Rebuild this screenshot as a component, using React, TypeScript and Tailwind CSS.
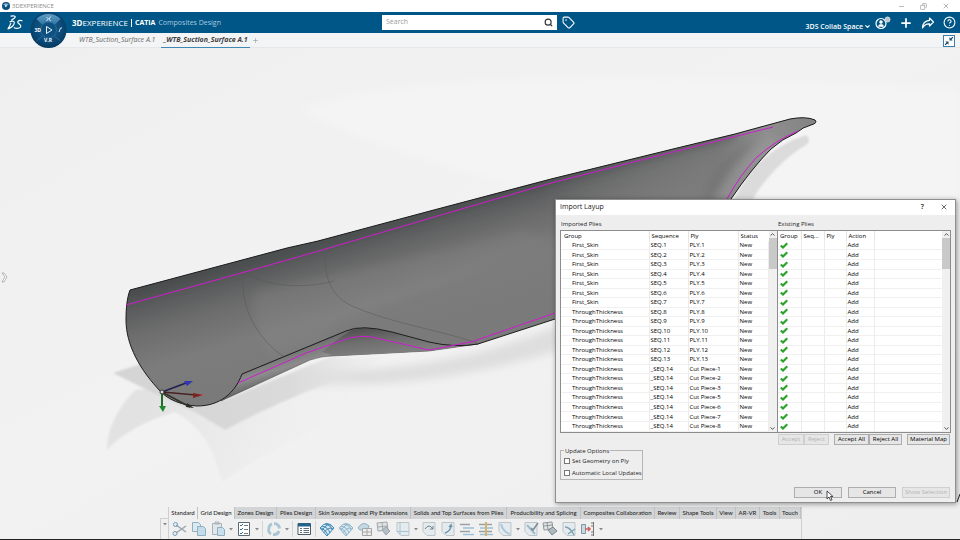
import { useState } from "react";
import {
    ChevronDown,
    ChevronUp,
    CircleHelp,
    Copy,
    Minus,
    Plus,
    Search,
    Tag,
    X,
} from "lucide-react";

const skins = [1, 2, 3, 4, 5, 6, 7].map((n) => ({
    group: "First_Skin",
    sequence: `SEQ.${n}`,
    ply: `PLY.${n}`,
}));
const thickness = [8, 9, 10, 11, 12, 13].map((n) => ({
    group: "ThroughThickness",
    sequence: `SEQ.${n}`,
    ply: `PLY.${n}`,
}));
const pieces = [1, 2, 3, 5, 6, 7, 8].map((n) => ({
    group: "ThroughThickness",
    sequence: "_SEQ.14",
    ply: `Cut Piece-${n}`,
}));
const plies = [...skins, ...thickness, ...pieces];

const sections = [
    "Standard",
    "Grid Design",
    "Zones Design",
    "Plies Design",
    "Skin Swapping and Ply Extensions",
    "Solids and Top Surfaces from Plies",
    "Producibility and Splicing",
    "Composites Collaboration",
    "Review",
    "Shape Tools",
    "View",
    "AR-VR",
    "Tools",
    "Touch",
];

function TitleBar() {
    return (
        <div className="flex h-3 shrink-0 items-center bg-white px-0.5 text-[#8a8a8a]">
            <svg viewBox="0 0 10 10" className="h-2 w-2">
                <circle cx="5" cy="5" r="5" fill="#0b4f7d" />
                <path d="M1.5 3.5a4 4 0 0 1 7 0L5 5z" fill="#7db4d6" />
                <path d="M4 3.5v3L6.5 5z" fill="#fff" />
            </svg>
            <span className="ml-0.5 text-[6px] leading-3">3DEXPERIENCE</span>
            <div className="ml-auto flex gap-[15px] pr-2">
                <button aria-label="Minimize">
                    <Minus size={7} strokeWidth={2} />
                </button>
                <button aria-label="Restore">
                    <Copy size={7} strokeWidth={2} className="-scale-x-100" />
                </button>
                <button aria-label="Close">
                    <X size={8} strokeWidth={2} />
                </button>
            </div>
        </div>
    );
}

function Compass() {
    return (
        <svg viewBox="0 0 38 38" className="absolute top-0 left-[29px] z-10 h-[38px] w-[38px]">
            <defs>
                <radialGradient id="ball" cx="50%" cy="45%" r="55%">
                    <stop offset="0" stopColor="#1c5f8e" />
                    <stop offset="0.7" stopColor="#0b4a78" />
                    <stop offset="1" stopColor="#06395f" />
                </radialGradient>
                <linearGradient id="north" x1="0" y1="0" x2="0" y2="1">
                    <stop offset="0" stopColor="#5d9cc4" />
                    <stop offset="1" stopColor="#2f75a3" />
                </linearGradient>
            </defs>
            <circle cx="19.500" cy="18" r="18" fill="url(#ball)" />
            <path d="M7.500 7a17 17 0 0 1 24 0l-6 6a9 9 0 0 0-12 0z" fill="url(#north)" />
            <circle cx="19.500" cy="18" r="8" fill="#0e507f" stroke="#2c6f9c" strokeWidth="0.8" />
            <path d="M7.500 29l6-5M31.500 29l-6-5" stroke="#2c6f9c" strokeWidth="0.8" />
            <path d="M17.500 14.500v7l5.500-3.500z" fill="none" stroke="#e8f3fa" strokeWidth="1" />
            <path d="M17.500 5.500l2 1-2 2.500M21.500 4.500l-1.500 3 2 1.500" fill="none" stroke="#dcebf5" strokeWidth="0.9" />
            <text x="5.500" y="20" fontSize="5" fontWeight="700" fill="#fff">3D</text>
            <path d="M30 20l1.500-4M31.500 16h1.500" stroke="#cfe3f0" strokeWidth="1" />
            <text x="15" y="30" fontSize="5" fontWeight="700" fill="#fff">V.R</text>
        </svg>
    );
}

function Header() {
    return (
        <header className="relative flex h-[21px] shrink-0 items-center bg-[#005686] text-white">
            <Compass />
            <div className="flex w-[382px] items-center pl-[7px]">
                <svg viewBox="0 0 16 16" className="h-4 w-4" fill="none" stroke="#fff" strokeWidth="1.200" strokeLinecap="round">
                    <path d="M4 1.200c2.500-.7 4.500-.2 4.200 1C8 3.300 6 4.200 4.600 5" />
                    <path d="M1 13.800c3-.8 6.200-3.300 6.300-6C7.300 5.500 4.500 6 3 6.800M3.800 8.400c-.7 1.800-1.700 3.800-2.800 5.400" />
                    <path d="M15 5.800c-2-.9-4.600-.2-4.200 1.500.4 1.500 3.300 2.200 3 4-.4 2.200-4.500 2.600-6.500 1.400" />
                </svg>
                <div className="ml-[49px] flex items-center text-[8px] leading-3 whitespace-nowrap">
                    <b>3D</b>
                    <span>EXPERIENCE</span>
                    <span className="mx-[3px] h-2 w-px bg-white" />
                    <b className="text-[7px]">CATIA</b>
                    <span className="ml-[3px] text-[7px] text-[#a9cbe0]">Composites Design</span>
                </div>
            </div>
            <form className="flex h-[15px] w-[175px] items-center bg-white pr-1">
                <input
                    aria-label="Search"
                    placeholder="Search"
                    className="min-w-0 flex-1 px-1 text-[7px] text-gray-700 outline-none placeholder:text-[#9a9a9a]"
                />
                <button type="button" aria-label="Run search" className="text-[#333]">
                    <Search size={9} strokeWidth={3} />
                </button>
            </form>
            <button aria-label="Tags" className="ml-[5px]">
                <Tag size={13} strokeWidth={2} />
            </button>
            <div className="ml-auto flex items-center gap-1 pr-1">
                <button className="flex items-center gap-px pt-2 text-[7px] leading-3 font-semibold">
                    3DS Collab Space
                    <ChevronDown size={7} strokeWidth={4} />
                </button>
                <div className="flex items-center gap-2">
                    <button aria-label="Profile">
                        <svg viewBox="0 0 16 14" className="h-[14px] w-4" fill="none" stroke="#fff">
                            <circle cx="6" cy="7.500" r="5" strokeWidth="1.200" />
                            <circle cx="6" cy="6" r="1.500" fill="#fff" strokeWidth="0.500" />
                            <path d="M3.500 10.500c0-3 5-3 5 0z" fill="#fff" strokeWidth="0.500" />
                            <circle cx="12.500" cy="3.500" r="2.500" fill="#b9c4cc" stroke="#d7dde1" />
                        </svg>
                    </button>
                    <button aria-label="Add">
                        <Plus size={14} strokeWidth={3} />
                    </button>
                    <button aria-label="Share">
                        <svg viewBox="0 0 14 14" className="h-[14px] w-[14px]" fill="none" stroke="#fff" strokeWidth="1.200" strokeLinejoin="round">
                            <path d="M8.500 2l4 4-4 4V7.800C5 7.600 3 9 1.500 12 1.700 7.500 4 4.800 8.500 4.400z" />
                        </svg>
                    </button>
                    <button aria-label="Help">
                        <CircleHelp size={13} strokeWidth={2} />
                    </button>
                </div>
            </div>
        </header>
    );
}

function DocumentTabs() {
    return (
        <nav className="flex h-[15px] shrink-0 items-start border-b border-[#e6e7e9] bg-[#f3f4f6] pl-[79px] text-[7px] leading-[14px] text-[#6b6b6b] italic">
            <a href="#first">WTB_Suction_Surface A.1</a>
            <a href="#second" className="ml-1.5 border-b-2 border-[#3f87b5] px-0.5 font-bold text-[#3d3d3d]">
                _WTB_Suction_Surface A.1
            </a>
            <button aria-label="New tab" className="ml-0.5 self-center text-[#999]">
                <Plus size={7} />
            </button>
            <button aria-label="Exit full view" className="mt-0.5 mr-[5px] ml-auto">
                <svg viewBox="0 0 12 12" className="h-3 w-3">
                    <rect x="0.500" y="0.500" width="11" height="11" fill="#fff" stroke="#3a7eab" />
                    <path d="M6.500 5.500V2.300l1.200 1.200L9.500 1.800l.8.8-1.800 1.800 1.200 1.100zM5.500 6.500v3.200L4.300 8.500l-1.800 1.700-.8-.8 1.800-1.800-1.200-1.100z" fill="#14466b" />
                </svg>
            </button>
        </nav>
    );
}

const outline =
    "M130 290L287 248 318 241 430 211 551 179 673 149 735 134 790 119Q806 116 815 120Q818 123 811 125Q803 127 796 133Q782 139 771 149Q752 168 731 199L680 270 555 319 478 344Q455 348 429 342L392 332Q361 324 346 331L242 374C235 393 220 406 197 406C180 405 168 399 161 392C140 370 126 345 126 320C126 308 127 298 130 290Z";

function BladeScene() {
    return (
        <svg
            viewBox="0 48 960 491"
            preserveAspectRatio="xMidYMid slice"
            className="absolute inset-0 h-full w-full"
        >
            <defs>
                <linearGradient id="floor" x1="0" y1="0" x2="1" y2="1">
                    <stop offset="0" stopColor="#efeff0" />
                    <stop offset="0.45" stopColor="#f2f2f2" />
                    <stop offset="1" stopColor="#eeeeee" />
                </linearGradient>
                <linearGradient id="skin" gradientUnits="userSpaceOnUse" x1="330" y1="234" x2="364" y2="350">
                    <stop offset="0" stopColor="#4c4f51" />
                    <stop offset="0.12" stopColor="#585a5b" />
                    <stop offset="0.35" stopColor="#6d6d6d" />
                    <stop offset="0.65" stopColor="#7c7c7c" />
                    <stop offset="1" stopColor="#7a7a7a" />
                </linearGradient>
                <linearGradient id="tip" gradientUnits="userSpaceOnUse" x1="560" y1="240" x2="810" y2="130">
                    <stop offset="0" stopColor="#8a8a8a" stopOpacity="0" />
                    <stop offset="0.65" stopColor="#808080" stopOpacity="0.7" />
                    <stop offset="0.85" stopColor="#939393" stopOpacity="0.9" />
                    <stop offset="1" stopColor="#858585" />
                </linearGradient>
                <linearGradient id="under" gradientUnits="userSpaceOnUse" x1="280" y1="352" x2="288" y2="378">
                    <stop offset="0" stopColor="#6e6e6e" />
                    <stop offset="0.6" stopColor="#8c8c8c" />
                    <stop offset="1" stopColor="#6a6a6a" />
                </linearGradient>
                <linearGradient id="wave" gradientUnits="userSpaceOnUse" x1="365" y1="328" x2="368" y2="355">
                    <stop offset="0" stopColor="#505050" />
                    <stop offset="0.5" stopColor="#6e6e6e" />
                    <stop offset="1" stopColor="#7e7e7e" />
                </linearGradient>
                <linearGradient id="shade" gradientUnits="userSpaceOnUse" x1="120" y1="390" x2="400" y2="360">
                    <stop offset="0" stopColor="#d4d4d4" />
                    <stop offset="0.6" stopColor="#dadada" />
                    <stop offset="1" stopColor="#e8e8e8" stopOpacity="0" />
                </linearGradient>
                <linearGradient id="faint" gradientUnits="userSpaceOnUse" x1="150" y1="400" x2="360" y2="470">
                    <stop offset="0" stopColor="#e2e2e2" />
                    <stop offset="1" stopColor="#f0f0f0" stopOpacity="0" />
                </linearGradient>
                <filter id="soft" x="-20%" y="-20%" width="140%" height="140%">
                    <feGaussianBlur stdDeviation="4" />
                </filter>
                <filter id="edge" x="-20%" y="-20%" width="140%" height="140%">
                    <feGaussianBlur stdDeviation="1" />
                </filter>
                <clipPath id="outline">
                    <path d={outline} />
                </clipPath>
            </defs>
            <rect x="0" y="48" width="960" height="491" fill="url(#floor)" />
            <g filter="url(#soft)">
                <path d="M300 110Q420 60 960 90V205H600Q400 160 300 110z" fill="#f4f4f4" />
                <path d="M300 370Q440 375 560 325V350Q430 390 300 385z" fill="#dedede" />
            </g>
            <g filter="url(#edge)">
                <path d="M135 390C116 410 107 430 107 450Q130 425 175 412 210 430 222 482 280 440 400 395L330 370z" fill="url(#faint)" />
                <path d="M113 373L141 364 165 395 225 400 330 357 380 358 365 370Q290 395 225 430L195 412 160 396z" fill="url(#shade)" />
                <path d="M806 135Q812 140 806 145Q780 160 757 192L750 205H730L752 170Q775 145 806 135z" fill="#dbdbdb" />
            </g>

            {/* underside of the flange */}
            <path d="M242 374L346 331Q361 324 392 332L429 342Q455 348 478 344L429 351 332 356Q322 356 310 360L221 401Q236 390 242 374z" fill="url(#under)" stroke="#444" strokeWidth="0.500" />
            <path d="M322 352Q338 338 350 331Q361 325 392 332L429 342Q455 348 478 344L429 351 336 356z" fill="url(#wave)" />

            <g clipPath="url(#outline)">
                <rect x="120" y="110" width="700" height="300" fill="url(#skin)" />
                <path d="M540 182L820 110V330H540z" fill="url(#tip)" />
                <g filter="url(#soft)">
                    <path d="M125 286L318 237 551 175 735 130V139L551 186 318 251 130 300z" fill="#484a4c" opacity="0.500" />
                    <path d="M255 290Q330 280 520 230L555 240 400 300Q330 320 320 340L270 356Q250 320 255 290z" fill="#8a8a8a" opacity="0.250" />
                    <path d="M715 200Q735 160 765 140L780 142Q750 170 732 200z" fill="#a0a0a0" opacity="0.500" />
                    <path d="M700 200Q715 165 745 145L755 146Q725 170 715 200z" fill="#6c6c6c" opacity="0.400" />
                </g>
            </g>
            <path d={outline} fill="none" stroke="#1d1d1d" strokeWidth="1" />
            <g fill="none" stroke="#565656" strokeWidth="0.500">
                <path d="M244 272C238 305 258 340 283 356" />
                <path d="M245 272C265 287 305 289 334 281" />
                <path d="M325 252C324 275 330 295 350 305C385 322 440 330 477 343" />
            </g>
            <g fill="none" stroke="#cf1ccf" strokeWidth="1">
                <path d="M126 305L245 272 312 253 441 215 551 183 673 152 773 127" />
                <path d="M238 383L306 353 349 338Q360 335 372 337L429 350 471 342 558 312" />
                <path d="M798 131Q776 140 757 157 740 175 727 199" />
            </g>

            {/* axis system at the root of the blade */}
            <g fill="none" strokeWidth="1.500">
                <path d="M162 392L186 383" stroke="#20204e" />
                <path d="M162 392L196 395" stroke="#4a2020" />
                <path d="M162 392L190 407" stroke="#333028" />
                <path d="M162 392V408" stroke="#1f6b2b" strokeWidth="2" />
            </g>
            <path d="M184 381l9 0-6 5z" fill="#2f35b5" />
            <path d="M193 393l10 2-10 3z" fill="#7c2424" />
            <circle cx="202" cy="395" r="1" fill="#e23b3b" />
            <path d="M187 403l7 5-8-1z" fill="#2b2b2b" />
            <path d="M159 406h7l-3 6z" fill="#1c8a2e" />
            <circle cx="162" cy="392" r="2" fill="#ddd" stroke="#333" />
            <path d="M960 494l-3 8" stroke="#222" strokeWidth="1" />

            <path d="M2 273h2l3 4-3 5H2l3-5z" fill="#fff" stroke="#999" strokeWidth="0.700" />
        </svg>
    );
}

function ScrollBar() {
    return (
        <div className="flex w-2 shrink-0 flex-col items-center bg-[#f0f0f0] text-[#444]">
            <ChevronUp size={7} strokeWidth={3} />
            <div className="h-[31px] w-full bg-[#c9c9c9]" />
            <ChevronDown size={7} strokeWidth={3} className="mt-auto" />
        </div>
    );
}

function ImportedPlies() {
    return (
        <section className="w-[217px] shrink-0">
            <h3 className="h-[10px] pl-px leading-[9px]">Imported Plies</h3>
            <div className="flex border border-[#8c8c8c] bg-white text-black">
                <table className="w-[207px] table-fixed border-collapse text-left">
                    <colgroup>
                        <col className="w-[88px]" />
                        <col className="w-[39px]" />
                        <col className="w-[50px]" />
                        <col className="w-[30px]" />
                    </colgroup>
                    <thead>
                        <tr className="h-[10px]">
                            <th className="border-r border-[#e4e4e4] pl-[3px] font-normal">Group</th>
                            <th className="border-r border-[#e4e4e4] pl-0.5 font-normal">Sequence</th>
                            <th className="border-r border-[#e4e4e4] pl-0.5 font-normal">Ply</th>
                            <th className="pl-0.5 font-normal">Status</th>
                        </tr>
                    </thead>
                    <tbody className="h-[190px]">
                        {plies.map((row) => (
                            <tr key={row.group + row.ply} className="border-b border-[#f0f0f0]">
                                <td className="border-r border-[#ececec] pl-[11px]">{row.group}</td>
                                <td className="border-r border-[#ececec] pl-px">{row.sequence}</td>
                                <td className="border-r border-[#ececec] pl-px">{row.ply}</td>
                                <td className="border-r border-[#ececec] pl-px">New</td>
                            </tr>
                        ))}
                    </tbody>
                </table>
                <ScrollBar />
            </div>
        </section>
    );
}

function ExistingPlies() {
    return (
        <section className="min-w-0 flex-1">
            <h3 className="h-[10px] pl-px leading-[9px]">Existing Plies</h3>
            <div className="flex border border-[#8c8c8c] bg-white text-black">
                <table className="min-w-0 flex-1 table-fixed border-collapse text-left">
                    <colgroup>
                        <col className="w-[23px]" />
                        <col className="w-[23px]" />
                        <col className="w-[22px]" />
                        <col className="w-[28px]" />
                        <col />
                    </colgroup>
                    <thead>
                        <tr className="h-[10px]">
                            <th className="border-r border-[#e4e4e4] pl-0.5 font-normal">Group</th>
                            <th className="border-r border-[#e4e4e4] pl-0.5 font-normal">Seq...</th>
                            <th className="border-r border-[#e4e4e4] pl-0.5 font-normal">Ply</th>
                            <th className="border-r border-[#e4e4e4] pl-0.5 font-normal">Action</th>
                            <th />
                        </tr>
                    </thead>
                    <tbody className="h-[190px]">
                        {plies.map((row) => (
                            <tr key={row.group + row.ply} className="border-b border-[#f0f0f0]">
                                <td className="border-r border-[#ececec] pl-0.5">
                                    <svg viewBox="0 0 8 7" className="h-[7px] w-2">
                                        <path d="M.8 3.500l2.200 2L7.300 1.200" fill="none" stroke="#2ba32a" strokeWidth="2.200" />
                                    </svg>
                                </td>
                                <td className="border-r border-[#ececec]" />
                                <td className="border-r border-[#ececec]" />
                                <td className="border-r border-[#ececec] pl-px">Add</td>
                                <td />
                            </tr>
                        ))}
                    </tbody>
                </table>
                <ScrollBar />
            </div>
        </section>
    );
}

const buttonClass =
    "h-[11px] border border-[#adadad] bg-[#e6e6e6] text-center leading-[9px] whitespace-nowrap text-black disabled:border-[#cfcfcf] disabled:text-[#b3b3b3]";

function ImportDialog() {
    const [geometry, setGeometry] = useState(false);
    const [updates, setUpdates] = useState(false);

    return (
        <div
            role="dialog"
            aria-label="Import Layup"
            className="absolute top-[151px] right-1 w-[401px] border border-[#8f8f8f] bg-[#eeeeee] text-[6px] leading-[8px] text-[#222] shadow-[1px_1px_5px_rgba(0,0,0,0.4)]"
        >
            <div className="flex h-[15px] items-center bg-white px-1 pb-px text-[7px]">
                <span>Import Layup</span>
                <button aria-label="Help" className="ml-auto font-semibold">
                    ?
                </button>
                <button aria-label="Close" className="mr-[3px] ml-4">
                    <X size={8} strokeWidth={2} />
                </button>
            </div>
            <div className="px-1 pt-[5px] pb-1">
                <div className="flex">
                    <ImportedPlies />
                    <ExistingPlies />
                </div>
                <div className="mt-px flex justify-end pr-px">
                    <button disabled className={`${buttonClass} w-[26px]`}>Accept</button>
                    <button disabled className={`${buttonClass} w-[25px]`}>Reject</button>
                    <button className={`${buttonClass} ml-[5px] w-[35px]`}>Accept All</button>
                    <button className={`${buttonClass} w-[33px]`}>Reject All</button>
                    <button className={`${buttonClass} ml-[5px] w-[43px] border-[#555]`}>Material Map</button>
                </div>
                <fieldset className="mt-0.5 w-[83px] border border-[#b5b5b5] pl-[3px]">
                    <legend className="px-px">Update Options</legend>
                    <label className="flex h-3 items-center gap-0.5 whitespace-nowrap">
                        <input
                            type="checkbox"
                            checked={geometry}
                            onChange={(e) => setGeometry(e.target.checked)}
                            className="h-1.5 w-1.5 shrink-0 appearance-none border border-[#777] bg-white checked:bg-[#005686]"
                        />
                        Set Geometry on Ply
                    </label>
                    <label className="flex h-3 items-center gap-0.5 whitespace-nowrap">
                        <input
                            type="checkbox"
                            checked={updates}
                            onChange={(e) => setUpdates(e.target.checked)}
                            className="h-1.5 w-1.5 shrink-0 appearance-none border border-[#777] bg-white checked:bg-[#005686]"
                        />
                        Automatic Local Updates
                    </label>
                </fieldset>
                <div className="mt-[7px] flex justify-end gap-1.5 pr-px">
                    <button className={`${buttonClass} w-12`}>OK</button>
                    <button className={`${buttonClass} w-12`}>Cancel</button>
                    <button disabled className={`${buttonClass} w-12`}>Show Selection</button>
                </div>
            </div>
            <svg viewBox="0 0 8 12" className="absolute right-[121px] bottom-0 h-3 w-2">
                <path d="M1 1v8l2-2 1.500 3.500 1.500-.7L4.500 6.500H7z" fill="#fff" stroke="#222" strokeWidth="0.800" />
            </svg>
        </div>
    );
}

function Tool({ label, children }) {
    return (
        <button aria-label={label} className="flex w-[19px] shrink-0 justify-center">
            <svg viewBox="0 0 16 16" className="h-4 w-4" fill="none" stroke="#8fa3ae" strokeWidth="1">
                {children}
            </svg>
        </button>
    );
}

function Caret() {
    return (
        <button aria-label="More" className="flex w-[7px] shrink-0 items-center justify-center">
            <svg viewBox="0 0 4 3" className="h-[3px] w-1">
                <path d="M0 0h4L2 2.500z" fill="#8a8a8a" />
            </svg>
        </button>
    );
}

function Divider() {
    return <span className="ml-0.5 w-0.5 border-l border-[#d5d5d5]" />;
}

function Mesh({ color }) {
    return (
        <g stroke={color} fill="none">
            <path d="M1 7Q8-2 15 7L8 15z" fill="#d9e8f1" />
            <path d="M3 9Q9 1 13 5M5 11.500Q10 5 14 8M3 5Q9 6 11 12M6 3Q12 4 13 9M2 7Q6 8 9 14" />
        </g>
    );
}

function Sheet() {
    return <path d="M2 1.500h12v13H6l-4-4z" fill="#e4ebef" stroke="#bcc5ca" />;
}

function ActionBar() {
    return (
        <div className="relative mt-auto flex w-full justify-center pl-0.5">
            <div className="flex w-[642px]">
                <div className="mt-[11px] flex h-[21px] w-2 justify-center border-t border-l border-[#d0d0d0] bg-[#f0f0f0] pt-1">
                    <svg viewBox="0 0 4 3" className="h-[3px] w-1">
                        <path d="M0 0h4L2 2.500z" fill="#888" />
                    </svg>
                </div>
                <div className="min-w-0 flex-1 border-x border-[#cfcfcf]">
                    <nav className="grid h-[11px] grid-cols-[29px_37px_42px_39px_95px_96px_74px_74px_25px_37px_19px_24px_20px_1fr] bg-[#d2d4d5] font-['Lato',sans-serif] text-[6px] leading-[12px] font-medium text-[#2b2b2b]">
                        {sections.map((name, i) => (
                            <a
                                key={name}
                                href={"#" + i}
                                className={
                                    i < 2
                                        ? "border-r border-[#bfc1c2] bg-[#f0f0f0] text-center whitespace-nowrap"
                                        : "border-r border-[#bfc1c2] text-center whitespace-nowrap"
                                }
                            >
                                {name}
                            </a>
                        ))}
                    </nav>
                    <div className="flex h-[21px] items-stretch border-t border-[#d5d5d5] bg-[#f0f0f0] py-0.5 pl-px">
                        <Tool label="Cut">
                            <path d="M4 4l10 7M4 12l10-7" stroke="#9aa7ae" strokeWidth="1.500" />
                            <circle cx="3" cy="12.500" r="2" stroke="#6d9fbd" />
                            <circle cx="3.500" cy="3.500" r="2" stroke="#6d9fbd" />
                        </Tool>
                        <Tool label="Copy">
                            <path d="M1.500 1.500h6l2 2v7h-8z" fill="#dbe9f1" stroke="#8fb0c4" />
                            <path d="M6.500 5.500h6l2 2v7h-8z" fill="#c4dcea" stroke="#8fb0c4" />
                        </Tool>
                        <Tool label="Paste">
                            <path d="M2.500 2.500h9v11h-9zM5 1h4v2H5z" fill="#e3e6e8" stroke="#a9b3b9" />
                            <path d="M7.500 6.500h5l2 2v6h-7z" fill="#c9dfec" stroke="#8fb0c4" />
                        </Tool>
                        <Caret />
                        <Tool label="Tree">
                            <path d="M2.500 1.500h11v13h-11z" fill="#fff" stroke="#5b6a73" />
                            <path d="M4 4l1 1 2-2M4 8l1 1 2-2M4 12l1 1 2-2" stroke="#2f6e98" />
                            <path d="M8 4.500h4M8 8.500h4M8 12.500h4" stroke="#777" />
                        </Tool>
                        <Caret />
                        <Divider />
                        <Tool label="Update">
                            <path d="M3 9a5 5 0 0 1 3-6M8 2.500a5.500 5.500 0 0 1 5.500 5M13 10a5.500 5.500 0 0 1-6 3.500M5 13a5 5 0 0 1-2.500-4" stroke="#a9c6d5" strokeWidth="3" />
                        </Tool>
                        <Caret />
                        <Divider />
                        <Tool label="Parameters">
                            <path d="M2 2.500h12.500v11H2z" fill="#fff" stroke="#4d5a62" />
                            <path d="M2 4h12.500" stroke="#1f6490" strokeWidth="3" />
                            <path d="M4 7.500h2M4 9.500h2M4 11.500h2M7.500 7.500H13M7.500 9.500H13M7.500 11.500H13" stroke="#5f6f78" />
                        </Tool>
                        <Divider />
                        <Tool label="Grid">
                            <Mesh color="#3d88b7" />
                        </Tool>
                        <Tool label="Reference grid">
                            <Mesh color="#8fb5cb" />
                        </Tool>
                        <Tool label="Grid panel">
                            <path d="M1 7Q6-1 12 5L10 9H3z" fill="#c5d9e4" stroke="#8fb0c4" />
                            <path d="M5.500 7.500h9v7h-9zM5.500 11h9M10 7.500v7" fill="#eee" stroke="#a5a5a5" />
                        </Tool>
                        <Tool label="Grid transfer">
                            <path d="M1 2l10-1 1 8-10 1zM1.500 6l10-1M6 1.500l1 8" fill="#e2e4e5" stroke="#a0a6aa" />
                            <path d="M6 9l4-3 4 4-4 4z" fill="#b4bfc5" stroke="#99a2a7" />
                        </Tool>
                        <Tool label="Ply table">
                            <Sheet />
                            <path d="M5 2v12M2 10.500h12" stroke="#a9c3d1" />
                        </Tool>
                        <Caret />
                        <Tool label="Rotate ply">
                            <Sheet />
                            <path d="M4 8q4-6 8 0l-3 0M12 8V5" stroke="#75828a" />
                        </Tool>
                        <Tool label="Ply direction">
                            <Sheet />
                            <path d="M5 12q6-2 6-8l-2 2M11 4l1 2" stroke="#6f93a8" strokeWidth="1.500" />
                        </Tool>
                        <Tool label="Stack">
                            <path d="M1 3.500h10M1 10.500h10" stroke="#9aa1a6" strokeWidth="1.500" />
                            <path d="M4 7h11M4 13.500h11" stroke="#9cc1d6" strokeWidth="1.500" />
                        </Tool>
                        <Tool label="Stack section">
                            <path d="M1 3.500h13M1 10.500h13" stroke="#9aa1a6" strokeWidth="1.500" />
                            <path d="M2 7h13M2 13.500h13" stroke="#9cc1d6" strokeWidth="1.500" />
                            <path d="M8 1v14" stroke="#d3b469" strokeWidth="2" />
                        </Tool>
                        <Tool label="Core sample">
                            <Sheet />
                            <path d="M4 3q2 8 9 10" stroke="#a9c8d9" strokeWidth="2" />
                        </Tool>
                        <Caret />
                        <Tool label="Edit ply">
                            <Sheet />
                            <path d="M4 4l8 9" stroke="#9fbccb" strokeWidth="2" />
                            <path d="M8 7l2 2 5-7" stroke="#808a90" strokeWidth="1.500" />
                        </Tool>
                        <Tool label="Grid to plies">
                            <path d="M1 2l9-1 1 7-9 1zM1.500 5l9-1M5 1.500l1 7" fill="#e2e4e5" stroke="#8f979c" />
                            <path d="M6 9l5-3 4 4-5 4z" fill="#aebac1" stroke="#7c868c" />
                        </Tool>
                        <Tool label="Trim ply">
                            <Sheet />
                            <path d="M4 6q5 0 9 8M7 13l7-5" stroke="#7fa3b6" strokeWidth="1.500" />
                        </Tool>
                        <Tool label="Export">
                            <path d="M1.500 3.500h4v9h-4z" fill="#c6d9e4" stroke="#8496a1" />
                            <path d="M5 8h5M8 6l2 2-2 2" stroke="#d0605e" strokeWidth="1.500" />
                            <path d="M13.500 1v14M11 2h3M11 5h3M11 11h3M11 14h3" stroke="#777" />
                        </Tool>
                        <Caret />
                    </div>
                </div>
            </div>
        </div>
    );
}

export default function App() {
    return (
        <div className="flex h-screen flex-col overflow-hidden border-b border-[#222] bg-[#f0f0f0] font-['Open_Sans',sans-serif]">
            <TitleBar />
            <Header />
            <DocumentTabs />
            <main className="relative flex min-h-0 flex-1 flex-col">
                <BladeScene />
                <ActionBar />
                <ImportDialog />
            </main>
        </div>
    );
}
